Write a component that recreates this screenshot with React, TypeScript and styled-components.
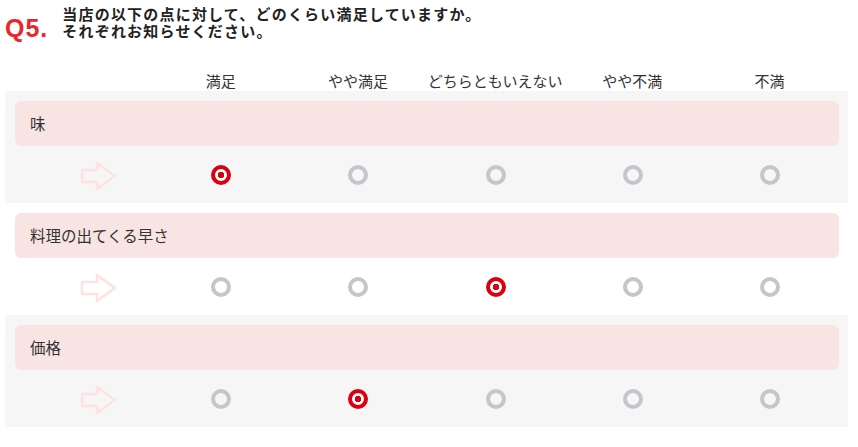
import React from "react";
import styled, { createGlobalStyle } from "styled-components";

const Global = createGlobalStyle`
  html, body { margin: 0; padding: 0; background: #fff; }
  body { font-family: "Noto Sans CJK JP", "Noto Sans", sans-serif; color: #333; }
`;

const Page = styled.div`
  padding: 5px 10px 0 5px;
`;

const TitleRow = styled.div`
  display: flex;
  align-items: flex-start;
  gap: 14px;
  height: 66px;
`;

const QNum = styled.div`
  font-family: "Liberation Sans", Arial, sans-serif;
  font-weight: 700;
  font-size: 25px;
  color: #e8282c;
  margin-top: 9px;
  letter-spacing: 1px;
`;

const QText = styled.div`
  display: flex;
  flex-direction: column;
`;

const QLine = styled.div`
  font-size: 15px;
  font-weight: 700;
  line-height: 17px;
  height: 17px;
  color: #222;
  letter-spacing: 1.2px;
  white-space: nowrap;
`;

const Grid = styled.div`
  display: grid;
  grid-template-columns: repeat(6, 1fr);
  align-items: center;
`;

const Header = styled(Grid)`
  padding: 0 10px;
  height: 20px;
`;

const HeadLabel = styled.div`
  text-align: center;
  font-size: 15px;
  line-height: 20px;
  color: #333;
  white-space: nowrap;
`;

const Section = styled.div<{ $shade: boolean }>`
  background: ${(p) => (p.$shade ? "#f6f6f6" : "#ffffff")};
  padding: 10px 9px 0 10px;
  height: 112px;
  box-sizing: border-box;
`;

const ItemBox = styled.div`
  background: #f9e4e4;
  border-radius: 6px;
  height: 45px;
  display: flex;
  align-items: center;
  padding-left: 15px;
  padding-bottom: 2px;
  box-sizing: border-box;
  font-size: 15.5px;
  color: #333;
`;

const RadioRow = styled(Grid)`
  height: 57px;
`;

const ArrowCell = styled.div`
  display: flex;
  align-items: center;
  padding-left: 65px;
  padding-top: 3px;
`;

const RadioCell = styled.div`
  display: flex;
  justify-content: center;
  align-items: center;
  padding-top: 1px;
`;

const Radio = styled.span<{ $on: boolean }>`
  width: 20px;
  height: 20px;
  border-radius: 50%;
  box-sizing: border-box;
  border: 4px solid ${(p) => (p.$on ? "#d9000f" : "#c3c6ca")};
  background: ${(p) => (p.$on ? "radial-gradient(circle, #d9000f 0 3px, #fff 3.5px)" : "transparent")};
`;

const Arrow = () => (
  <svg width="38" height="30" viewBox="0 0 38 30">
    <path
      d="M2 9 H17 V2 L35 15 L17 28 V21 H2 Z"
      fill="none"
      stroke="#ffe2e2"
      strokeWidth="2.6"
      strokeLinejoin="round"
    />
  </svg>
);

const options = ["満足", "やや満足", "どちらともいえない", "やや不満", "不満"];
const items: { label: string; value: number }[] = [
  { label: "味", value: 0 },
  { label: "料理の出てくる早さ", value: 2 },
  { label: "価格", value: 1 },
];

export default function App() {
  return (
    <Page>
      <Global />
      <TitleRow>
        <QNum>Q5.</QNum>
        <QText>
          <QLine>当店の以下の点に対して、どのくらい満足していますか。</QLine>
          <QLine>それぞれお知らせください。</QLine>
        </QText>
      </TitleRow>
      <Header>
        <div />
        {options.map((o) => (
          <HeadLabel key={o}>{o}</HeadLabel>
        ))}
      </Header>
      {items.map((it, i) => (
        <Section key={it.label} $shade={i % 2 === 0}>
          <ItemBox>{it.label}</ItemBox>
          <RadioRow>
            <ArrowCell>
              <Arrow />
            </ArrowCell>
            {options.map((o, j) => (
              <RadioCell key={o}>
                <Radio $on={j === it.value} />
              </RadioCell>
            ))}
          </RadioRow>
        </Section>
      ))}
    </Page>
  );
}
